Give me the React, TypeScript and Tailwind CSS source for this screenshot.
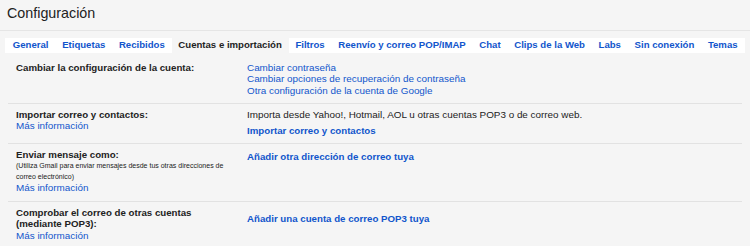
const tabs = [
  "General",
  "Etiquetas",
  "Recibidos",
  "Cuentas e importación",
  "Filtros",
  "Reenvío y correo POP/IMAP",
  "Chat",
  "Clips de la Web",
  "Labs",
  "Sin conexión",
  "Temas",
];

const ACTIVE = "Cuentas e importación";

export default function App() {
  return (
    <div className="w-[750px] h-[246px] overflow-hidden bg-[#f5f5f5] text-[#222] font-['Liberation_Sans',Arial,sans-serif]">
      {/* Header */}
      <div className="h-[31px] border-b border-[#e5e5e5] pl-[7px] pt-[5px] text-[14.3px] leading-[16px]">
        Configuración
      </div>

      {/* Tabs */}
      <div className="mt-[7px] mx-[5px] h-[15px] bg-white flex pl-[1px]">
        {tabs.map((t) => (
          <div
            key={t}
            className={`h-full flex items-center px-[6.8px] text-[9.6px] font-bold whitespace-nowrap ${
              t === ACTIVE ? "bg-[#f5f5f5] text-[#222]" : "text-[#15c]"
            }`}
          >
            {t}
          </div>
        ))}
      </div>

      {/* Settings rows */}
      <div className="mt-[4px] mx-2 text-[9.9px] leading-[11.3px]">
        <div className="h-[47px] border-b border-[#e2e2e2] flex pt-[5px]">
          <div className="w-[239px] pl-2 pr-[19px] font-bold text-[9.7px]">Cambiar la configuración de la cuenta:</div>
          <div className="flex-1 flex flex-col text-[#15c]">
            <span>Cambiar contraseña</span>
            <span>Cambiar opciones de recuperación de contraseña</span>
            <span>Otra configuración de la cuenta de Google</span>
          </div>
        </div>

        <div className="h-[40px] border-b border-[#e2e2e2] flex pt-[5px]">
          <div className="w-[239px] pl-2 pr-[19px]">
            <div className="font-bold text-[9.7px]">Importar correo y contactos:</div>
            <div className="text-[#15c]">Más información</div>
          </div>
          <div className="flex-1">
            <div>Importa desde Yahoo!, Hotmail, AOL u otras cuentas POP3 o de correo web.</div>
            <div className="mt-[5px] font-bold text-[9.7px] text-[#15c]">Importar correo y contactos</div>
          </div>
        </div>

        <div className="h-[58px] border-b border-[#e2e2e2] flex pt-[5px]">
          <div className="w-[239px] pl-2 pr-[19px]">
            <div className="font-bold text-[9.7px]">Enviar mensaje como:</div>
            <div className="text-[7px] leading-[11px]">
              (Utiliza Gmail para enviar mensajes desde tus otras direcciones de correo electrónico)
            </div>
            <div className="text-[#15c]">Más información</div>
          </div>
          <div className="flex-1 pt-[2px] font-bold text-[9.7px] text-[#15c]">Añadir otra dirección de correo tuya</div>
        </div>

        <div className="flex pt-[5px]">
          <div className="w-[239px] pl-2 pr-[19px]">
            <div className="font-bold text-[9.7px]">Comprobar el correo de otras cuentas (mediante POP3):</div>
            <div className="text-[#15c]">Más información</div>
          </div>
          <div className="flex-1 pt-[6px] font-bold text-[9.7px] text-[#15c]">Añadir una cuenta de correo POP3 tuya</div>
        </div>
      </div>
    </div>
  );
}
